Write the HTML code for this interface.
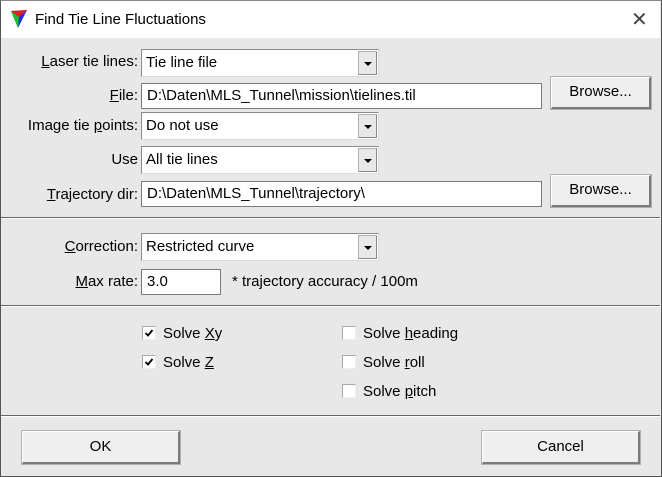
<!DOCTYPE html>
<html><head><meta charset="utf-8"><style>
*{margin:0;padding:0;box-sizing:border-box}
body{width:662px;height:477px;overflow:hidden;background:#e8e8e8;font-family:"Liberation Sans",sans-serif;font-size:15px;color:#000;position:relative}
.a{position:absolute}
.win{position:absolute;left:0;top:0;width:662px;height:477px;border:1px solid #555;border-top:1px solid #888}
.title{position:absolute;left:1px;top:1px;width:659px;height:37px;background:#fff}
.lbl{position:absolute;text-align:right;white-space:nowrap;line-height:18px}
.in{position:absolute;background:#fff;border:1px solid #7a7a7a;padding-left:5px;line-height:23px;white-space:nowrap}
.cb{position:absolute;background:#fff;border:1px solid #8a8a8a;border-right-color:#dcdcdc;border-bottom-color:#dcdcdc;padding-left:4px;line-height:25px}
.dd{position:absolute;right:1px;top:1px;width:19px;height:24px;background:#e8e8e8;border:1px solid #b0b0b0;border-right-color:#888;border-bottom-color:#888}
.dd:after{content:"";position:absolute;left:5px;top:10px;border-left:4px solid transparent;border-right:4px solid transparent;border-top:4px solid #000}
.btn{position:absolute;background:#efefef;border:1px solid #fff;border-right:2px solid #7a7a7a;border-bottom:2px solid #7a7a7a;outline:1px solid #b0b0b0;text-align:center}
.sep{position:absolute;left:1px;width:659px;height:2px;background:#666;border-bottom:1px solid #fff}
.chk{position:absolute;width:14px;height:14px;background:#fff;border:1px solid #aaa;border-right-color:#eee;border-bottom-color:#eee}
.ct{position:absolute;white-space:nowrap;line-height:18px}
u{text-decoration:underline}
</style></head><body>
<div class="win"></div>
<div class="title"></div>
<svg class="a" style="left:10px;top:9px" width="18" height="20" viewBox="0 0 18 20"><polygon points="1,2 17,1 8,19" fill="#2030e0"/><polygon points="1,2 17,1 9,8" fill="#e02020"/><polygon points="1,2 9,8 8,19" fill="#20c020"/></svg>
<div class="a" style="left:35px;top:11px;font-size:15px">Find Tie Line Fluctuations</div>
<div class="a" style="left:631px;top:7px;font-size:20px;font-weight:300;color:#444">✕</div>

<div class="lbl" style="right:524px;top:53px"><u>L</u>aser tie lines:</div>
<div class="cb" style="left:141px;top:49px;width:238px;height:28px">Tie line file<div class="dd"></div></div>

<div class="lbl" style="right:524px;top:87px"><u>F</u>ile:</div>
<div class="in" style="left:141px;top:83px;width:401px;height:26px">D:\Daten\MLS_Tunnel\mission\tielines.til</div>
<div class="btn" style="left:551px;top:77px;width:100px;height:32px;line-height:28px">Browse...</div>

<div class="lbl" style="right:524px;top:117px">Image tie <u>p</u>oints:</div>
<div class="cb" style="left:141px;top:112px;width:238px;height:28px">Do not use<div class="dd"></div></div>

<div class="lbl" style="right:524px;top:151px">Use</div>
<div class="cb" style="left:141px;top:146px;width:238px;height:28px">All tie lines<div class="dd"></div></div>

<div class="lbl" style="right:524px;top:186px"><u>T</u>rajectory dir:</div>
<div class="in" style="left:141px;top:181px;width:401px;height:26px">D:\Daten\MLS_Tunnel\trajectory\</div>
<div class="btn" style="left:551px;top:175px;width:100px;height:32px;line-height:28px">Browse...</div>

<div class="sep" style="top:217px"></div>

<div class="lbl" style="right:524px;top:238px"><u>C</u>orrection:</div>
<div class="cb" style="left:141px;top:233px;width:238px;height:28px">Restricted curve<div class="dd"></div></div>

<div class="lbl" style="right:524px;top:273px"><u>M</u>ax rate:</div>
<div class="in" style="left:141px;top:269px;width:80px;height:26px">3.0</div>
<div class="ct" style="left:232px;top:273px">* trajectory accuracy / 100m</div>

<div class="sep" style="top:305px"></div>

<div class="chk" style="left:142px;top:326px"><svg width="12" height="12" style="position:absolute;left:0;top:0"><path d="M2.5 6 L5 8.5 L9.5 3" stroke="#000" stroke-width="1.8" fill="none"/></svg></div>
<div class="ct" style="left:163px;top:325px">Solve <u>X</u>y</div>
<div class="chk" style="left:142px;top:355px"><svg width="12" height="12" style="position:absolute;left:0;top:0"><path d="M2.5 6 L5 8.5 L9.5 3" stroke="#000" stroke-width="1.8" fill="none"/></svg></div>
<div class="ct" style="left:163px;top:354px">Solve <u>Z</u></div>
<div class="chk" style="left:342px;top:326px"></div>
<div class="ct" style="left:363px;top:325px">Solve <u>h</u>eading</div>
<div class="chk" style="left:342px;top:355px"></div>
<div class="ct" style="left:363px;top:354px">Solve <u>r</u>oll</div>
<div class="chk" style="left:342px;top:384px"></div>
<div class="ct" style="left:363px;top:383px">Solve <u>p</u>itch</div>

<div class="sep" style="top:415px"></div>

<div class="btn" style="left:22px;top:431px;width:158px;height:33px;line-height:29px">OK</div>
<div class="btn" style="left:482px;top:431px;width:158px;height:33px;line-height:29px">Cancel</div>
</body></html>
